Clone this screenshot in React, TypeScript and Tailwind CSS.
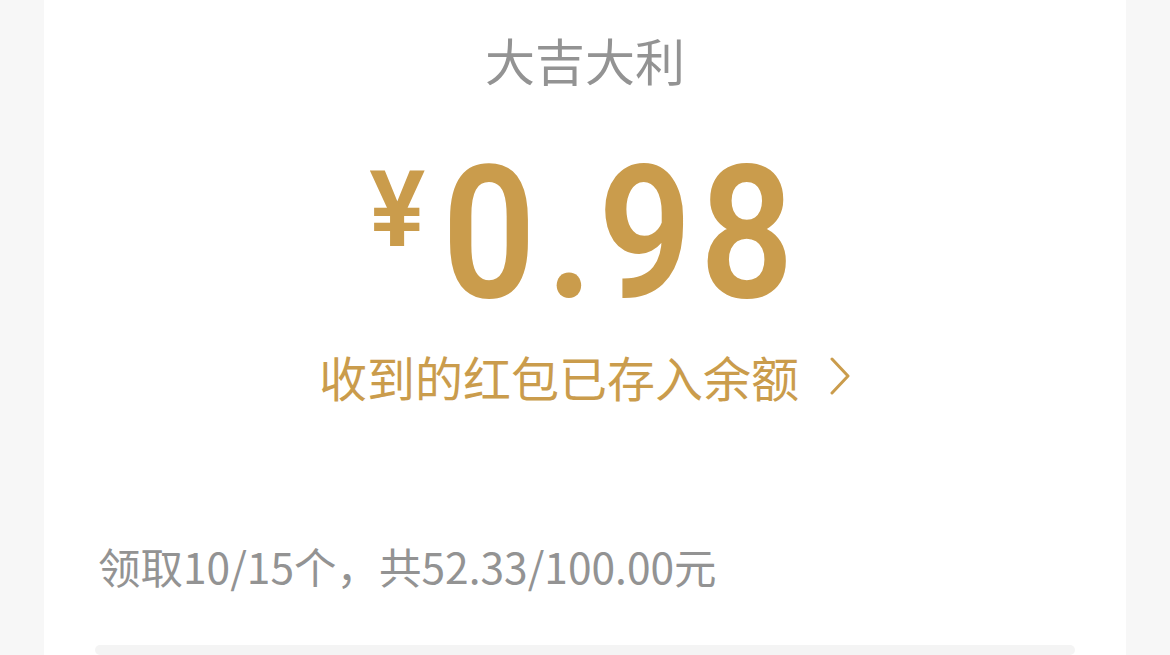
import React from 'react';

const cjk = { fontFamily: '"Noto Sans CJK SC", "Noto Sans", sans-serif' };
const num = { fontFamily: 'Roboto, "Liberation Sans", sans-serif' };

const App: React.FC = () => {
  return (
    <div className="h-[655px] w-full overflow-hidden bg-[#f7f7f7] flex justify-center">
      <div className="w-[1082px] bg-white flex flex-col items-center px-[51px]" style={cjk}>
        {/* Greeting */}
        <div className="pt-[34px] text-[50px] leading-none text-[#939393]">大吉大利</div>

        {/* Amount */}
        <div className="mt-[57px] flex items-start text-[#ca9c4c] ml-[-6px]" style={num}>
          <span className="mt-[17px] text-[105px] leading-none font-semibold">¥</span>
          <span className="ml-[17px] mr-[-45px] inline-block origin-left scale-x-[0.89] text-[185px] leading-none font-semibold tracking-[2.5px]">
            0<span className="ml-[9px] mr-[3px]">.</span><span className="mr-[6px]">9</span>8
          </span>
        </div>

        {/* Balance link */}
        <div className="mt-[26px] flex items-center gap-[30px] text-[48px] leading-none text-[#ca9c4c]">
          <span>收到的红包已存入余额</span>
          <svg width="22" height="38" viewBox="0 0 22 38" fill="none">
            <path d="M3 2 L19 19 L3 36" stroke="#ca9c4c" strokeWidth="3" strokeLinecap="round" strokeLinejoin="round" />
          </svg>
        </div>

        {/* Summary */}
        <div className="mt-[145px] self-stretch text-[42.5px] leading-none text-[#939393] pl-[3px]">
          领取10/15个，共52.33/100.00元
        </div>

        {/* List panel */}
        <div className="mt-[57px] self-stretch h-[200px] rounded-[28px] bg-[#f4f4f4]" />
      </div>
    </div>
  );
};

export default App;
